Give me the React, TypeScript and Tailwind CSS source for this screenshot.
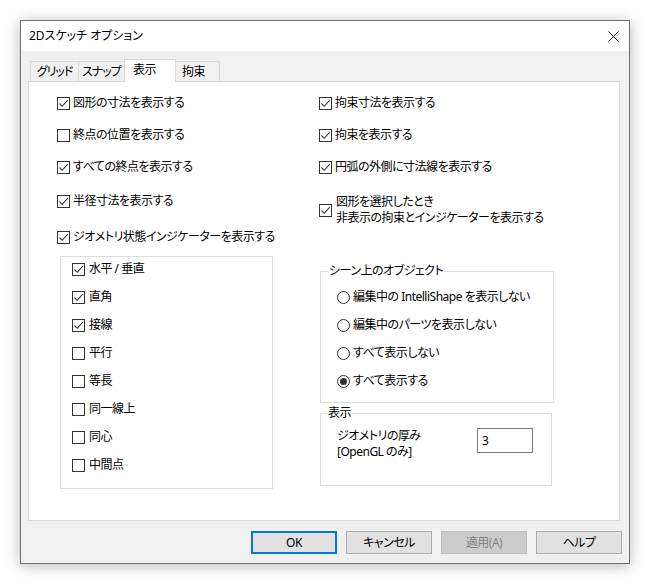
import type { ReactNode } from 'react';

const font = "font-['Noto_Sans','Noto_Sans_CJK_JP',sans-serif] [font-feature-settings:'palt']";

function CheckBox({ checked }: { checked: boolean }) {
  return (
    <span className="flex h-[13px] w-[13px] shrink-0 items-center justify-center border border-[#333333] bg-white">
      {checked && (
        <svg width="11" height="11" viewBox="0 0 11 11" fill="none">
          <path d="M1.5 5.5 L4.2 8.3 L9.8 2.2" stroke="#333333" strokeWidth="1.1" />
        </svg>
      )}
    </span>
  );
}

function Radio({ checked }: { checked: boolean }) {
  return (
    <span className="flex h-[13px] w-[13px] shrink-0 items-center justify-center rounded-full border border-[#333333] bg-white">
      {checked && <span className="h-[7px] w-[7px] rounded-full bg-[#333333]" />}
    </span>
  );
}

function CheckRow({ checked, children, className = '' }: { checked: boolean; children: ReactNode; className?: string }) {
  return (
    <div className={`flex h-[16px] items-center gap-[3px] ${className}`}>
      <CheckBox checked={checked} />
      <span className="whitespace-nowrap">{children}</span>
    </div>
  );
}

const constraints: [string, boolean][] = [
  ['水平 / 垂直', true],
  ['直角', true],
  ['接線', true],
  ['平行', false],
  ['等長', false],
  ['同一線上', false],
  ['同心', false],
  ['中間点', false],
];

const sceneOptions: [string, boolean][] = [
  ['編集中の IntelliShape を表示しない', false],
  ['編集中のパーツを表示しない', false],
  ['すべて表示しない', false],
  ['すべて表示する', true],
];

function Tab({ label, selected, width }: { label: string; selected?: boolean; width: string }) {
  if (selected) {
    return (
      <div className={`relative z-10 -mb-px flex h-[23px] items-start whitespace-nowrap border border-b-0 border-[#d9d9d9] bg-white pl-[8px] pt-[2px] ${width}`}>
        {label}
      </div>
    );
  }
  return (
    <div className={`flex h-[20px] items-center justify-center overflow-hidden whitespace-nowrap border border-b-0 border-r-0 border-[#d9d9d9] bg-[#f0f0f0] tracking-[-1px] ${width}`}>
      {label}
    </div>
  );
}

function Button({ children, primary, disabled }: { children: ReactNode; primary?: boolean; disabled?: boolean }) {
  const look = primary
    ? 'border-2 border-[#0078d7] bg-[#e1e1e1] text-black'
    : disabled
      ? 'border border-[#bfbfbf] bg-[#cccccc] text-[#838383]'
      : 'border border-[#adadad] bg-[#e1e1e1] text-black';
  return <div className={`flex h-[23px] w-[86px] items-center justify-center ${look}`}>{children}</div>;
}

export default function App() {
  return (
    <div className={`h-[584px] w-[650px] bg-white pl-[20px] pt-[20px] text-[12px] leading-[16px] tracking-[-0.5px] text-black ${font}`}>
      <div className="flex h-[544px] w-[610px] flex-col border border-[#707070] bg-[#f0f0f0] shadow-[0_2px_14px_rgba(0,0,0,0.28)]">
        {/* title bar */}
        <div className="flex h-[30px] items-center justify-between bg-white pl-[8px] pr-[10px]">
          <span className="tracking-normal">2Dスケッチ オプション</span>
          <svg width="11" height="11" viewBox="0 0 11 11">
            <path d="M0.5 0.5 L10.5 10.5 M10.5 0.5 L0.5 10.5" stroke="#111" strokeWidth="1" />
          </svg>
        </div>

        <div className="flex flex-col pl-[7px] pt-[8px]">
          {/* tabs */}
          <div className="ml-[2px] flex h-[22px] items-end">
            <Tab label="グリッド" width="w-[48px]" />
            <Tab label="スナップ" width="w-[46px]" />
            <Tab label="表示" selected width="w-[52px]" />
            <div className="flex h-[20px] w-[44px] items-center whitespace-nowrap border border-b-0 border-l-0 border-[#d9d9d9] bg-[#f0f0f0] pl-[6px]">拘束</div>
          </div>

          {/* panel */}
          <div className="flex h-[440px] w-[592px] border border-[#d9d9d9] bg-white">
            {/* left column */}
            <div className="flex w-[290px] flex-col pl-[28px] pt-[13px]">
              <CheckRow checked>図形の寸法を表示する</CheckRow>
              <CheckRow checked={false} className="mt-[16px]">終点の位置を表示する</CheckRow>
              <CheckRow checked className="mt-[16px]">すべての終点を表示する</CheckRow>
              <CheckRow checked className="mt-[18px]">半径寸法を表示する</CheckRow>
              <CheckRow checked className="mt-[20px]">ジオメトリ状態インジケーターを表示する</CheckRow>

              <div className="ml-[3px] mt-[11px] flex h-[233px] w-[213px] flex-col gap-[12px] border border-[#dcdcdc] pl-[11px] pt-[4px]">
                {constraints.map(([label, checked]) => (
                  <div key={label} className="flex h-[16px] items-center gap-[4px]">
                    <CheckBox checked={checked} />
                    <span>{label}</span>
                  </div>
                ))}
              </div>
            </div>

            {/* right column */}
            <div className="flex flex-col pt-[13px]">
              <CheckRow checked>拘束寸法を表示する</CheckRow>
              <CheckRow checked className="mt-[16px]">拘束を表示する</CheckRow>
              <CheckRow checked className="mt-[16px]">円弧の外側に寸法線を表示する</CheckRow>
              <div className="mt-[19px] flex items-center gap-[4px]">
                <CheckBox checked />
                <div className="leading-[16px]">
                  <div>図形を選択したとき</div>
                  <div>非表示の拘束とインジケーターを表示する</div>
                </div>
              </div>

              <div className="relative ml-[1px] mt-[45px] flex h-[132px] w-[234px] flex-col gap-[12px] border border-[#dcdcdc] pl-[16px] pt-[17px]">
                <span className="absolute -top-[9px] left-[7px] bg-white px-[1px]">シーン上のオブジェクト</span>
                {sceneOptions.map(([label, checked]) => (
                  <div key={label} className="flex h-[16px] items-center gap-[3px]">
                    <Radio checked={checked} />
                    <span className="whitespace-nowrap">{label}</span>
                  </div>
                ))}
              </div>

              <div className="relative ml-[1px] mt-[10px] flex h-[73px] w-[232px] border border-[#dcdcdc] pl-[16px]">
                <span className="absolute -top-[9px] left-[6px] bg-white px-[1px]">表示</span>
                <div className="w-[140px] pt-[14px] leading-[16px]">
                  <div>ジオメトリの厚み</div>
                  <div>[OpenGL のみ]</div>
                </div>
                <div className="mt-[14px] flex h-[25px] w-[56px] items-center border border-[#7a7a7a] pl-[4px]">3</div>
              </div>
            </div>
          </div>

          {/* buttons */}
          <div className="mt-[10px] flex w-[594px] justify-end gap-[9px]">
            <Button primary>OK</Button>
            <Button>キャンセル</Button>
            <Button disabled>適用(A)</Button>
            <Button>ヘルプ</Button>
          </div>
        </div>
      </div>
    </div>
  );
}
